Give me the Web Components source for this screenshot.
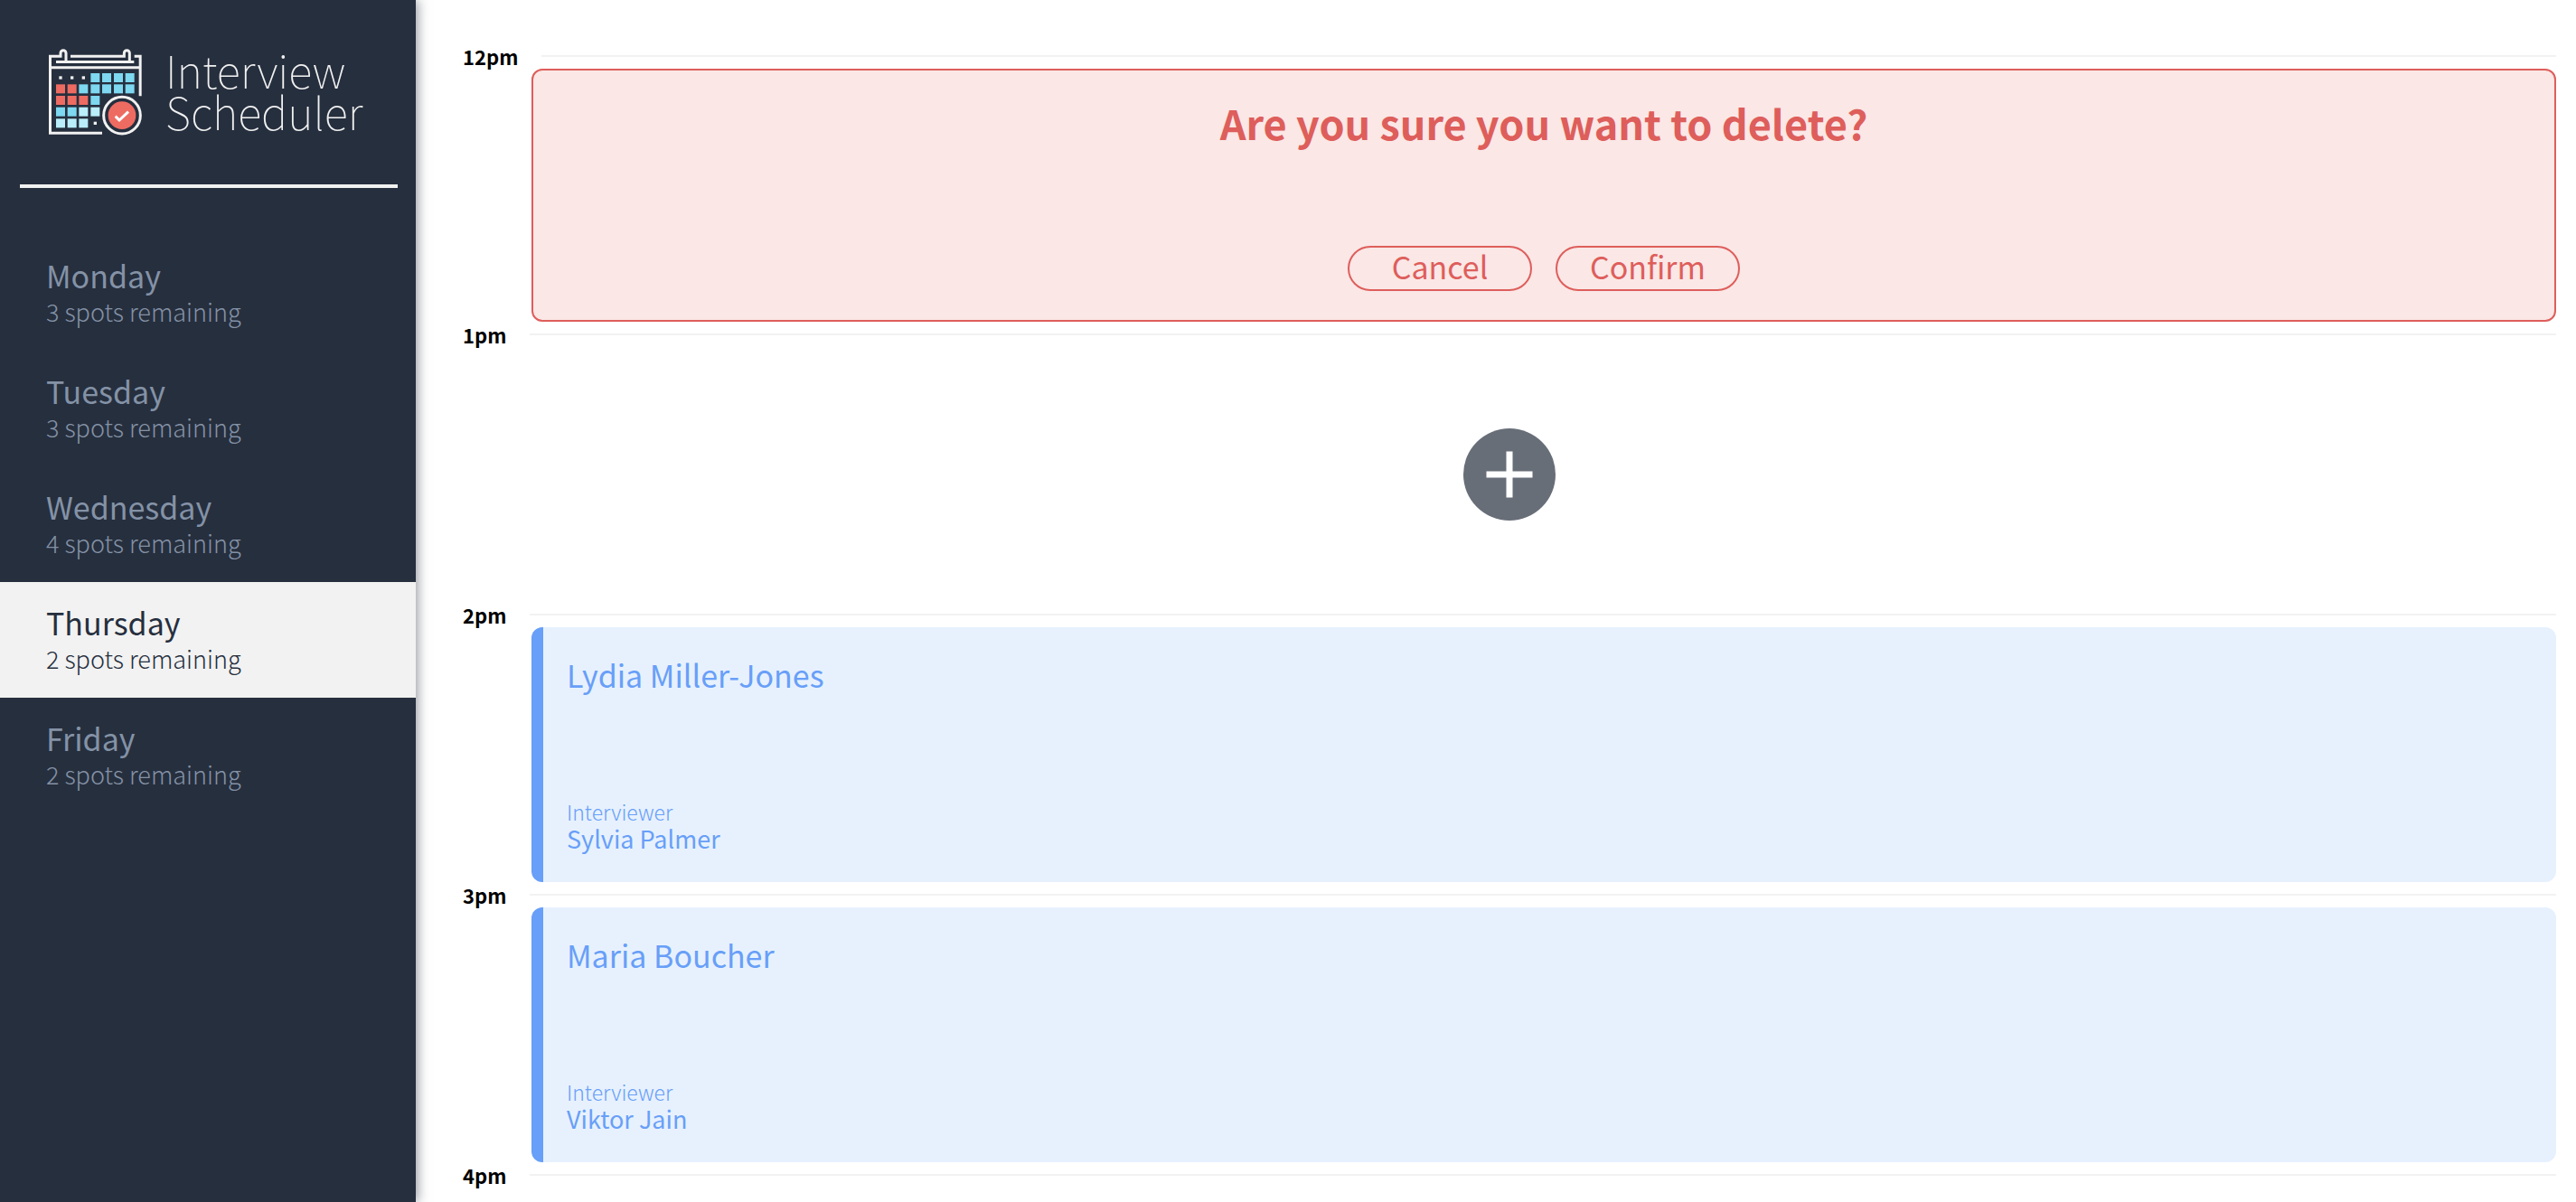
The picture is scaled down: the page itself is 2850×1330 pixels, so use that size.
<!DOCTYPE html>
<html lang="en">
<head>
<meta charset="utf-8">
<title>Interview Scheduler</title>
<style>
  body { margin: 0; background: #fff; font-family: "Source Sans Pro", "Noto Sans CJK JP", sans-serif; }
</style>
</head>
<body>
<scheduler-app></scheduler-app>
<script>
const define = (name, html, setup) => customElements.define(name, class extends HTMLElement {
  constructor() {
    super();
    const root = this.attachShadow({ mode: 'open' });
    const template = document.createElement('template');
    template.innerHTML = html;
    root.append(template.content.cloneNode(true));
    if (setup) setup(this, root);
  }
});

const calendarCells = () => {
  const rows = ['...cccc', 'rrccccc', 'rrrc', 'ccll', 'lll.'];
  const fills = { c: '#7dd8f0', r: '#ee6b62', l: '#b9eefa' };
  const xs = [66, 104, 142, 181, 219, 258, 296];
  const ys = [123, 160, 198, 236, 274];
  return rows.map((row, r) => [...row].map((cell, c) => cell === '.'
    ? `<rect x="${xs[c] + 10}" y="${ys[r] + 10}" width="10" height="10" fill="#f1f1f1"/>`
    : `<rect x="${xs[c]}" y="${ys[r]}" width="30" height="30" fill="${fills[cell]}"/>`).join('')).join('');
};

define('scheduler-logo', `
  <style>
    :host { display: flex; align-items: flex-start; gap: 25px; padding: 54px 0 0 54px; }
    svg { width: 104px; height: 96px; flex: none; }
    div { font-size: 49px; line-height: 46px; font-weight: 100; color: #f1f1f1; }
    span { display: block; }
  </style>
  <svg viewBox="42 42 312 288" aria-hidden="true">
    <g fill="none" stroke="#f1f1f1" stroke-width="9">
      <path d="M219 322H46.500V66.500H81V56a9 9 0 0 1 18 0V86M114 66.500H292V56a9 9 0 0 1 18 0V86M66 85.500H325M46 104.500H345M326 66.500H345.500V199"/>
      <circle cx="285" cy="263" r="61"/>
    </g>
    ${calendarCells()}
    <circle cx="285" cy="263" r="46" fill="#ee6b62"/>
    <path d="M263 266L276 279L306 251" fill="none" stroke="#fff" stroke-width="9"/>
  </svg>
  <div><span>Interview</span><span>Scheduler</span></div>`);

define('day-item', `
  <style>
    :host { display: block; color: #8492a6; }
    :host([selected]) { background: #f2f2f2; color: #262f3e; }
    a { display: block; padding: 25px 51px 23px; color: inherit; text-decoration: none; }
    span { display: block; line-height: 40px; }
    .name { font-size: 34px; font-weight: 400; }
    .spots { font-size: 27px; font-weight: 300; }
  </style>
  <a href="#"><span class="name"><slot></slot></span><span class="spots"></span></a>`,
  (host, root) => {
    root.querySelector('.spots').textContent = host.getAttribute('spots') + ' spots remaining';
    if (host.hasAttribute('selected')) root.querySelector('a').setAttribute('aria-current', 'true');
  });

define('hour-slot', `
  <style>
    :host { display: block; }
    header { display: flex; align-items: center; gap: 26px; height: 28px; }
    h4 { margin: 0; font-size: 22px; line-height: 28px; font-weight: 700; color: #000; }
    hr { flex: 1; margin: 0; border: 0; height: 2px; background: #f2f2f2; }
  </style>
  <header><h4></h4><hr></header>
  <slot></slot>`,
  (host, root) => { root.querySelector('h4').textContent = host.getAttribute('time'); });

define('confirm-card', `
  <style>
    :host { display: flex; flex-direction: column; align-items: center; justify-content: space-between;
      box-sizing: border-box; min-height: 280px; margin-left: 76px; padding: 30px 32px 32px;
      border: 2px solid #de5e5b; border-radius: 12px; background: #fae7e6; color: #de5e5b; }
    h1 { margin: 0; font-size: 45px; line-height: 56px; font-weight: 700; }
    div { display: flex; gap: 26px; }
    button { box-sizing: border-box; width: 204px; height: 50px; padding: 0 0 4px; border: 2px solid #de5e5b;
      border-radius: 25px; background: transparent; color: inherit; font-family: inherit; font-size: 34px;
      font-weight: 400; line-height: 42px; }
  </style>
  <h1><slot></slot></h1>
  <div><button type="button">Cancel</button><button type="button">Confirm</button></div>`);

define('add-card', `
  <style>
    :host { display: flex; align-items: center; justify-content: center; min-height: 282px; }
    button { display: block; padding: 0; border: 0; background: none; }
    svg { display: block; width: 102px; height: 102px; }
  </style>
  <button type="button" aria-label="Add"><svg viewBox="0 0 102 102">
    <circle cx="51" cy="51" r="51" fill="#686e78"/>
    <path d="M25.500 51H76.500M51 25.500V76.500" stroke="#fff" stroke-width="7"/>
  </svg></button>`);

define('appointment-card', `
  <style>
    :host { display: flex; flex-direction: column; justify-content: space-between; box-sizing: border-box;
      min-height: 282px; margin-left: 76px; padding: 34px 26px 32px;
      border-left: 13px solid #689ff8; border-radius: 12px; background: #e7f1fe; color: #689ff8; }
    h2, h3, h4 { margin: 0; font-weight: 400; }
    h2 { font-size: 34px; line-height: 38px; }
    h4 { font-size: 23px; line-height: 28px; font-weight: 300; }
    h3 { font-size: 27px; line-height: 32px; }
  </style>
  <h2><slot></slot></h2>
  <section><h4>Interviewer</h4><h3></h3></section>`,
  (host, root) => { root.querySelector('h3').textContent = host.getAttribute('interviewer'); });

define('scheduler-app', `
  <style>
    :host { display: flex; height: 100vh; overflow: hidden; }
    aside { flex: none; box-sizing: border-box; width: 460px; background: #262f3e; box-shadow: 2px 0 12px rgba(38, 47, 62, .5); }
    hr { margin: 54px 20px 52px 22px; border: 0; height: 4px; background: #f1f1f1; }
    main { flex: 1; padding: 48px 22px 0 52px; }
  </style>
  <aside>
    <scheduler-logo></scheduler-logo>
    <hr>
    <nav>
      <day-item spots="3">Monday</day-item>
      <day-item spots="3">Tuesday</day-item>
      <day-item spots="4">Wednesday</day-item>
      <day-item spots="2" selected>Thursday</day-item>
      <day-item spots="2">Friday</day-item>
    </nav>
  </aside>
  <main>
    <hour-slot time="12pm"><confirm-card>Are you sure you want to delete?</confirm-card></hour-slot>
    <hour-slot time="1pm"><add-card></add-card></hour-slot>
    <hour-slot time="2pm"><appointment-card interviewer="Sylvia Palmer">Lydia Miller-Jones</appointment-card></hour-slot>
    <hour-slot time="3pm"><appointment-card interviewer="Viktor Jain">Maria Boucher</appointment-card></hour-slot>
    <hour-slot time="4pm"></hour-slot>
  </main>`);
</script>
</body>
</html>
